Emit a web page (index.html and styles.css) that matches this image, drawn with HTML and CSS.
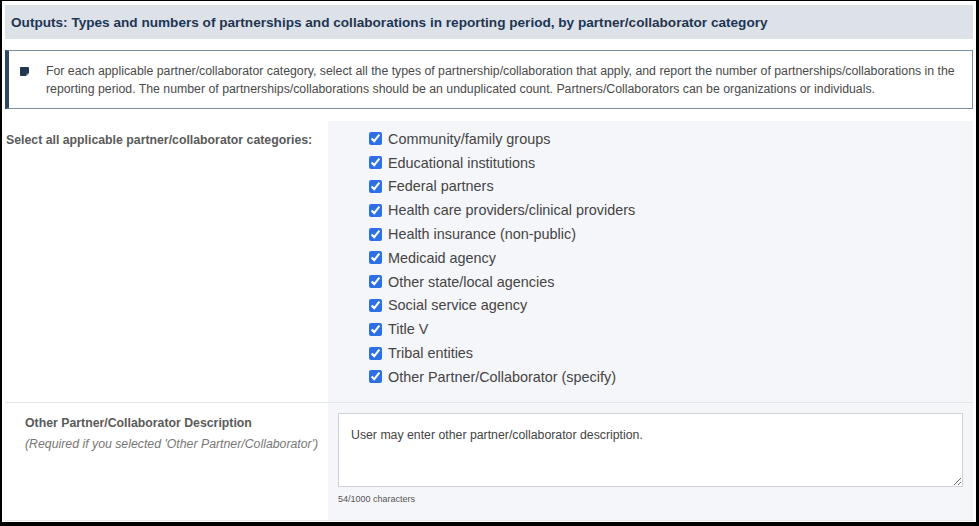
FILE: index.html
```html
<!DOCTYPE html>
<html lang="en">
<head>
    <meta charset="UTF-8">
    <meta name="viewport" content="width=device-width, initial-scale=1.0">
    <title>Partnerships and Collaborations</title>
    <link rel="stylesheet" href="styles.css">
</head>
<body>
    <div class="form-frame">
        <h2 class="section-title">Outputs: Types and numbers of partnerships and collaborations in reporting period, by partner/collaborator category</h2>

        <div class="info-box">
            <svg class="info-icon" width="9" height="9" viewBox="0 0 9 9">
                <path d="M1 0 H8 A1 1 0 0 1 9 1 V6 L6 9 H1 A1 1 0 0 1 0 8 V1 A1 1 0 0 1 1 0 Z" fill="#22364f"/>
                <path d="M6.5 6.5 H9 L6.5 9 Z" fill="#8796a8"/>
            </svg>
            <p>For each applicable partner/collaborator category, select all the types of partnership/collaboration that apply, and report the number of partnerships/collaborations in the reporting period. The number of partnerships/collaborations should be an unduplicated count. Partners/Collaborators can be organizations or individuals.</p>
        </div>

        <div class="form-row">
            <div class="row-label">
                <span class="label-main">Select all applicable partner/collaborator categories:</span>
            </div>
            <div class="row-field">
                <ul class="check-list">
                    <li><label><input type="checkbox" checked> Community/family groups</label></li>
                    <li><label><input type="checkbox" checked> Educational institutions</label></li>
                    <li><label><input type="checkbox" checked> Federal partners</label></li>
                    <li><label><input type="checkbox" checked> Health care providers/clinical providers</label></li>
                    <li><label><input type="checkbox" checked> Health insurance (non-public)</label></li>
                    <li><label><input type="checkbox" checked> Medicaid agency</label></li>
                    <li><label><input type="checkbox" checked> Other state/local agencies</label></li>
                    <li><label><input type="checkbox" checked> Social service agency</label></li>
                    <li><label><input type="checkbox" checked> Title V</label></li>
                    <li><label><input type="checkbox" checked> Tribal entities</label></li>
                    <li><label><input type="checkbox" checked> Other Partner/Collaborator (specify)</label></li>
                </ul>
            </div>
        </div>

        <div class="form-row desc-row">
            <div class="row-label">
                <span class="label-main">Other Partner/Collaborator Description</span>
                <span class="label-note">(Required if you selected 'Other Partner/Collaborator')</span>
            </div>
            <div class="row-field">
                <textarea class="desc-input">User may enter other partner/collaborator description.</textarea>
                <div class="char-count">54/1000 characters</div>
            </div>
        </div>
    </div>
</body>
</html>
```

FILE: styles.css
```css
html, body {
    margin: 0;
    padding: 0;
    background: #fff;
}

body {
    font-family: "Liberation Sans", Arial, sans-serif;
    color: #444;
}

.form-frame {
    box-sizing: border-box;
    width: 979px;
    height: 526px;
    border: 2px solid #000;
    border-top-width: 1px;
    border-right-width: 3px;
    border-bottom-width: 4px;
    padding: 4px 3px 0 3px;
    overflow: hidden;
}

.section-title {
    margin: 0;
    height: 34px;
    display: flex;
    align-items: center;
    padding: 0 6px;
    background: #dde1e8;
    color: #1f3550;
    font-size: 13.6px;
    font-weight: bold;
}

.info-box {
    margin-top: 11px;
    display: flex;
    align-items: flex-start;
    border: 1px solid #7b8fa3;
    border-left: 4px solid #2b4866;
    background: #fff;
    padding: 11px 10px 10px 11px;
}

.info-icon {
    flex: none;
    margin-top: 5px;
    margin-right: 17px;
}

.info-box p {
    margin: 0;
    font-size: 12.3px;
    line-height: 18px;
    color: #4a4a4a;
}

.form-row {
    margin-top: 12px;
    display: grid;
    grid-template-columns: 323px 1fr;
    border-bottom: 1px solid #e4e6ea;
}

.row-label {
    display: flex;
    flex-direction: column;
    padding: 12px 1px;
}

.label-main {
    font-size: 12.3px;
    font-weight: bold;
    color: #5a5a5a;
}

.row-field {
    background: #f5f6fa;
}

.check-list {
    list-style: none;
    margin: 0;
    padding: 6px 0 13px 37px;
}

.check-list li {
    height: 23.8px;
    display: flex;
    align-items: center;
}

.check-list label {
    display: flex;
    align-items: center;
    font-size: 14.4px;
    color: #444;
}

.check-list input {
    margin: 0 6px 0 4px;
    width: 13px;
    height: 13px;
    accent-color: #2d6fe6;
}

.desc-row {
    margin-top: 0;
}

.desc-row .row-label {
    padding: 13px 0 13px 20px;
}

.desc-row .label-main {
    line-height: 15px;
}

.label-note {
    margin-top: 6px;
    font-size: 12.3px;
    font-style: italic;
    color: #777;
    white-space: nowrap;
}

.desc-row .row-field {
    padding: 10px 10px 16px 10px;
}

.desc-input {
    display: block;
    box-sizing: border-box;
    width: 625px;
    height: 74px;
    margin: 0;
    padding: 14px 12px;
    border: 1px solid #cfd2d6;
    background: #fff;
    font-family: "Liberation Sans", Arial, sans-serif;
    font-size: 12.3px;
    color: #444;
    resize: vertical;
}

.char-count {
    margin-top: 7px;
    font-size: 9px;
    color: #555;
}
```
